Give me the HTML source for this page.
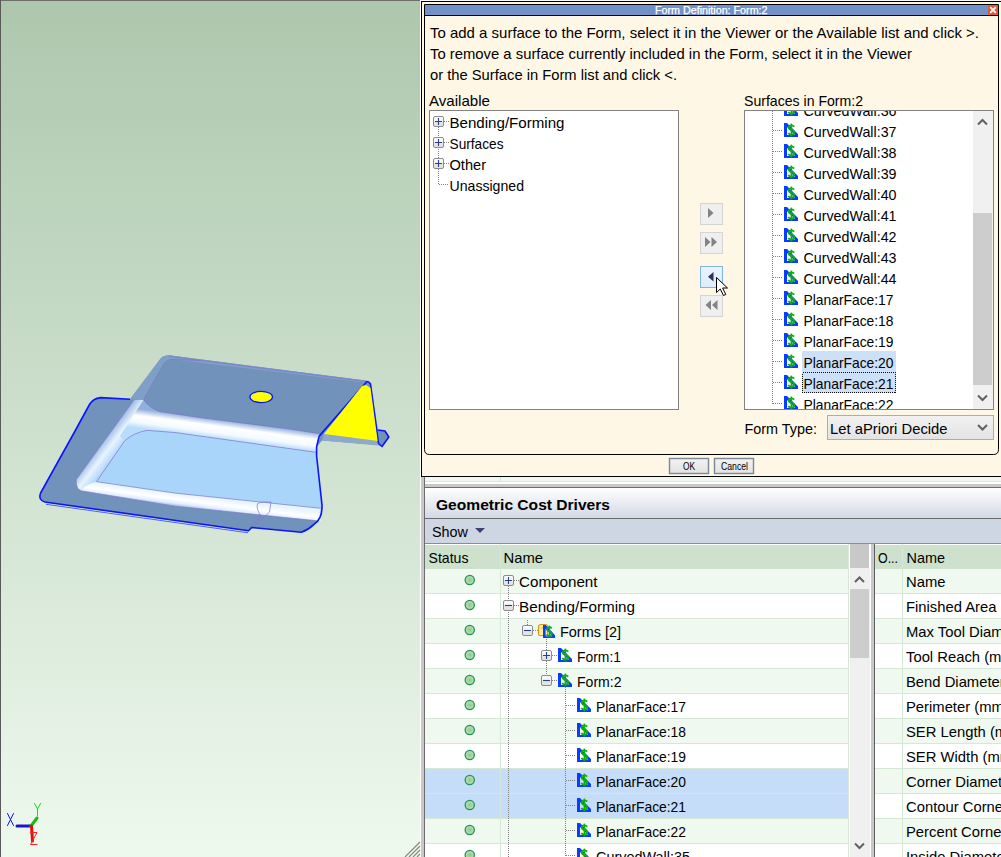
<!DOCTYPE html>
<html><head><meta charset="utf-8"><style>
html,body{margin:0;padding:0;width:1001px;height:857px;overflow:hidden;background:#fff}
svg{display:block}
text{font-family:'Liberation Sans', sans-serif}
</style></head><body>
<svg width="1001" height="857" viewBox="0 0 1001 857">
<defs>
<linearGradient id="vbg" x1="0" y1="0" x2="0" y2="1"><stop offset="0" stop-color="#adc7ad"/><stop offset="1" stop-color="#eef9ee"/></linearGradient>
<linearGradient id="hdr" x1="0" y1="0" x2="0" y2="1"><stop offset="0" stop-color="#ffffff"/><stop offset="1" stop-color="#d2d9e5"/></linearGradient>
<linearGradient id="btn" x1="0" y1="0" x2="0" y2="1"><stop offset="0" stop-color="#f2f2f2"/><stop offset="1" stop-color="#e3e3e3"/></linearGradient>
<linearGradient id="hov" x1="0" y1="0" x2="0" y2="1"><stop offset="0" stop-color="#ebf4fc"/><stop offset="1" stop-color="#dcecfc"/></linearGradient>
<linearGradient id="exp" x1="0" y1="0" x2="0" y2="1"><stop offset="0" stop-color="#fbfbfb"/><stop offset="0.5" stop-color="#f4f4f4"/><stop offset="0.5" stop-color="#e6e6e6"/><stop offset="1" stop-color="#e2e2e2"/></linearGradient>
<radialGradient id="dot" cx="0.5" cy="0.5" r="0.5"><stop offset="0" stop-color="#8cc694"/><stop offset="0.7" stop-color="#b2dcaa"/><stop offset="1" stop-color="#9cd09c"/></radialGradient>
<g id="ico"><path d="M0 0H3L14 11V14H0Z M3 4V12H11Z" fill="#0a3cff" fill-rule="evenodd"/><path d="M10.2 3.6Q9.2 2.4 7.4 2.4Q4.8 2.4 4.8 4.6Q4.8 6.4 7.4 6.9Q10.2 7.4 10.2 9.6Q10.2 11.6 7.4 11.6Q5.4 11.6 4.2 10.2" stroke="#0cb00c" stroke-width="1.9" fill="none"/><path d="M7.4 0.6V13.4" stroke="#0cb00c" stroke-width="1.6"/></g>
<g id="plus"><rect x="0.5" y="0.5" width="10" height="10" rx="1.5" fill="url(#exp)" stroke="#8c8c8c"/><path d="M2 5.5H9M5.5 2V9" stroke="#27408e" stroke-width="1.1"/></g>
<g id="minus"><rect x="0.5" y="0.5" width="10" height="10" rx="1.5" fill="url(#exp)" stroke="#8c8c8c"/><path d="M2 5.5H9" stroke="#27408e" stroke-width="1.1"/></g>
</defs>
<rect x="0" y="0" width="420" height="857" fill="url(#vbg)"/>
<rect x="0" y="0" width="420" height="1" fill="#6e6e6e"/>
<rect x="0" y="0" width="1" height="857" fill="#5a5a5a"/>
<rect x="420" y="0" width="1" height="857" fill="#ffffff"/>
<defs>
<linearGradient id="tf" gradientUnits="userSpaceOnUse" x1="175" y1="413.6" x2="172.4" y2="432.8"><stop offset="0" stop-color="#8fb0dc"/><stop offset="0.35" stop-color="#ffffff"/><stop offset="0.7" stop-color="#f4faff"/><stop offset="1" stop-color="#b8dcfc"/></linearGradient>
<linearGradient id="tf2" gradientUnits="userSpaceOnUse" x1="0" y1="429" x2="-2.5" y2="452"><stop offset="0" stop-color="#8fb0dc"/><stop offset="0.35" stop-color="#ffffff"/><stop offset="0.7" stop-color="#f4faff"/><stop offset="1" stop-color="#b8dcfc"/></linearGradient>
<linearGradient id="bf" gradientUnits="userSpaceOnUse" x1="175" y1="493.1" x2="173.3" y2="506.2"><stop offset="0" stop-color="#e8f4ff"/><stop offset="0.45" stop-color="#ffffff"/><stop offset="0.75" stop-color="#e0eeff"/><stop offset="1" stop-color="#98b8e0"/></linearGradient>
<linearGradient id="lf" gradientUnits="userSpaceOnUse" x1="95" y1="447" x2="112" y2="460"><stop offset="0" stop-color="#88acdc"/><stop offset="0.55" stop-color="#e8f4ff"/><stop offset="1" stop-color="#b0d6fa"/></linearGradient>
</defs>
<g>
<path d="M100.7 397.6 L130 399.2 L161 358.1 Q164 355.3 169 355.3 L365.8 380.4 Q368.5 380.5 370.5 383.5 L378 430 L385 431 L388.8 437 L382 446.5 L378.5 445 L322 440.5 L316.6 447 L316.6 456 L322 505 Q322.5 519 314 524.3 Q308 530 301.3 532.3 L251.7 527.5 L248.5 530.7 L44.8 502 Q38 500 40.6 493 L75.6 430 L89.5 404.5 Q93 398.5 100.7 397.6 Z" fill="#7192ba"/>
<path d="M134 400 L76.3 479.6 Q75.5 488.5 81 490.8 L175 506.2 L319 521 L322 505 L316.6 456 L316.6 447 L319.7 433.7 L290 429 L200 417.6 L159.4 411.5 Q148 407 143.6 399.7 Z" fill="#a8cdf4"/>
<path d="M134 400 L76.3 479.6 Q75.5 488.5 81 490.8 L96.5 481.7 L124.5 441 Q128 436 133 434 L147 430 L143.6 399.7 Z" fill="url(#lf)"/>
<path d="M143.6 399.7 Q148 407 159.4 411.5 L200 417.6 L290 429 L319.7 433.7 L316.6 447 L316.5 452.4 L175 432.5 L147 430.4 Q136 432 124.5 441 L120 436 Z" fill="url(#tf)"/>
<path d="M124.5 441 Q133 433 147 430.4 L175 432.5 L316.5 452.4 L320.5 508.3 L175 493.1 L96.5 481.7 Z" fill="#aad5fa"/>
<path d="M96.5 481.7 L175 493.1 L320.5 508.3 L321 521 L175 506.2 L81 490.8 Q86 484 96.5 481.7 Z" fill="url(#bf)"/>
<path d="M163.7 364.2 Q167 359.4 172.5 359.4 L364 383 L368 386 L319 436.4 L319.7 433.7 L290 429 L200 417.6 L159.4 411.5 Q148 407 143.6 399.7 Z" fill="#7192ba"/>
<path d="M130 399.2 L161 358.1 Q164 355.3 169 355.3 L365.8 380.4 L364 382.6 L172.5 359.4 Q167 359.4 163.7 364.2 L143.6 399.7 Z" fill="#7f9fc8"/>
<path d="M324 434 L378 441 L378.5 445.5 L322 440.5 Z" fill="#8ea9cc"/>
<g fill="none" stroke="#7c74c8" stroke-width="0.7">
<path d="M169 356.3 L365.8 381.4"/>
<path d="M143.6 399.7 Q148 407 159.4 411.5 L200 417.6 L290 429 L319.7 433.7"/>
<path d="M124.5 441 Q133 433 147 430.4 L175 432.5 L316.5 452.4"/>
<path d="M96.5 481.7 L175 493.1 L320.5 508.3"/>
<path d="M124.5 441 L96.5 481.7"/>
<path d="M134 400 L76.3 479.6 Q75.5 488.5 81 490.8 L175 506.2 L319 521"/>
<path d="M163.7 364.2 Q167 359.4 172.5 359.4 L200 360.5 M163.7 364.2 L143.6 399.7"/>
<path d="M257.5 503.5 Q262 501.5 271 502 L269.5 512 M257.5 503.5 Q256 509 261 516.5 L249 527.5 M269.5 512 L254 526.5"/>
</g>
<g fill="none" stroke="#0a14ff" stroke-width="1.6" stroke-linejoin="round">
<path d="M130 399.2 L100.7 397.6 Q93 398.5 89.5 404.5 L75.6 430 L40.6 493 Q38 500 44.8 502 L248.5 530.7 L251.7 527.5 L301.3 532.3 Q308 530 314 524.3 Q322.5 519 322 505 L316.6 456 L316.6 447 L319 436.4"/>
<path d="M46 504.3 L248 532.8" stroke-width="0.8" stroke="#3040ff"/>
<path d="M319 436.4 L367 381.5 Q369 381.5 370.5 384 L378.5 443.5"/>
<path d="M378 430 L385 431 L388.8 437 L382 446.5 L378.5 443.5"/>
</g>
<path d="M362 386 L366 385 L370.5 388 L377.6 441 L324 434 Z" fill="#ffff00"/>
<ellipse cx="261.2" cy="397" rx="11.3" ry="5.6" fill="#ffff00" stroke="#0a14ff" stroke-width="1.3"/>
</g>
<g stroke-linecap="round">
<path d="M7.5 813.5L13.5 825.5M13.5 813.5L7.5 825.5" stroke="#1010ff" stroke-width="1"/>
<path d="M17 826H31" stroke="#1818d0" stroke-width="3"/>
<path d="M34.5 803.5L37.5 809M40.5 803.5L37.5 809V816" stroke="#10e010" stroke-width="1" fill="none"/>
<path d="M31 826L37 818" stroke="#10c010" stroke-width="3"/>
<path d="M31.5 826L32.5 841" stroke="#e01010" stroke-width="3"/>
<path d="M30.5 832.5H37L30.5 844.5H37" stroke="#ff2020" stroke-width="1" fill="none"/>
</g>
<path d="M405 857L420 842M409 857L420 846M413 857L420 850M417 857L420 854" stroke="#8a8a7a" stroke-width="1.2"/>
<rect x="421" y="0" width="580" height="857" fill="#ffffff"/>
<rect x="421" y="477" width="580" height="4" fill="#f0f9f0"/>
<rect x="421" y="481" width="580" height="1" fill="#d5e8d5"/>
<rect x="500" y="477" width="1" height="5" fill="#d5e8d5"/>
<rect x="421" y="484" width="580" height="3" fill="#c8c8c8"/>
<rect x="421" y="487" width="580" height="1" fill="#6c6c6c"/>
<rect x="425" y="488" width="576" height="30" fill="url(#hdr)"/>
<rect x="425" y="518" width="576" height="1" fill="#6c6c6c"/>
<rect x="425" y="519" width="576" height="24" fill="#cfd6e3"/>
<rect x="425" y="543" width="576" height="1" fill="#8c8c8c"/>
<rect x="421" y="477" width="3" height="380" fill="#c8c8c8"/>
<rect x="424" y="477" width="1" height="380" fill="#6c6c6c"/>
<text x="436" y="510" font-size="15.5" fill="#000" textLength="174" lengthAdjust="spacingAndGlyphs" font-weight="bold">Geometric Cost Drivers</text>
<text x="432" y="537" font-size="14.5" fill="#000" textLength="36" lengthAdjust="spacingAndGlyphs">Show</text>
<path d="M475 528H485L480 533Z" fill="#404070"/>
<rect x="425" y="544" width="424" height="25" fill="#cde1cd"/>
<rect x="425" y="544" width="424" height="1" fill="#ffffff"/>
<text x="428.5" y="563" font-size="15" fill="#000" textLength="40" lengthAdjust="spacingAndGlyphs">Status</text>
<text x="503.5" y="563" font-size="15" fill="#000" textLength="39.5" lengthAdjust="spacingAndGlyphs">Name</text>
<rect x="500" y="544" width="1" height="313" fill="#d5e8d5"/>
<rect x="425" y="569" width="424" height="24" fill="#f0f9f0"/>
<rect x="425" y="593" width="424" height="1" fill="#d5e8d5"/>
<rect x="500" y="569" width="1" height="25" fill="#d5e8d5"/>
<circle cx="469.75" cy="580" r="4.6" fill="url(#dot)" stroke="#22945a" stroke-width="1.3"/>
<rect x="425" y="594" width="424" height="24" fill="#ffffff"/>
<rect x="425" y="618" width="424" height="1" fill="#d5e8d5"/>
<rect x="500" y="594" width="1" height="25" fill="#d5e8d5"/>
<circle cx="469.75" cy="605" r="4.6" fill="url(#dot)" stroke="#22945a" stroke-width="1.3"/>
<rect x="425" y="619" width="424" height="24" fill="#f0f9f0"/>
<rect x="425" y="643" width="424" height="1" fill="#d5e8d5"/>
<rect x="500" y="619" width="1" height="25" fill="#d5e8d5"/>
<circle cx="469.75" cy="630" r="4.6" fill="url(#dot)" stroke="#22945a" stroke-width="1.3"/>
<rect x="425" y="644" width="424" height="24" fill="#ffffff"/>
<rect x="425" y="668" width="424" height="1" fill="#d5e8d5"/>
<rect x="500" y="644" width="1" height="25" fill="#d5e8d5"/>
<circle cx="469.75" cy="655" r="4.6" fill="url(#dot)" stroke="#22945a" stroke-width="1.3"/>
<rect x="425" y="669" width="424" height="24" fill="#f0f9f0"/>
<rect x="425" y="693" width="424" height="1" fill="#d5e8d5"/>
<rect x="500" y="669" width="1" height="25" fill="#d5e8d5"/>
<circle cx="469.75" cy="680" r="4.6" fill="url(#dot)" stroke="#22945a" stroke-width="1.3"/>
<rect x="425" y="694" width="424" height="24" fill="#ffffff"/>
<rect x="425" y="718" width="424" height="1" fill="#d5e8d5"/>
<rect x="500" y="694" width="1" height="25" fill="#d5e8d5"/>
<circle cx="469.75" cy="705" r="4.6" fill="url(#dot)" stroke="#22945a" stroke-width="1.3"/>
<rect x="425" y="719" width="424" height="24" fill="#f0f9f0"/>
<rect x="425" y="743" width="424" height="1" fill="#d5e8d5"/>
<rect x="500" y="719" width="1" height="25" fill="#d5e8d5"/>
<circle cx="469.75" cy="730" r="4.6" fill="url(#dot)" stroke="#22945a" stroke-width="1.3"/>
<rect x="425" y="744" width="424" height="24" fill="#ffffff"/>
<rect x="425" y="768" width="424" height="1" fill="#d5e8d5"/>
<rect x="500" y="744" width="1" height="25" fill="#d5e8d5"/>
<circle cx="469.75" cy="755" r="4.6" fill="url(#dot)" stroke="#22945a" stroke-width="1.3"/>
<rect x="425" y="769" width="424" height="24" fill="#c5ddf8"/>
<rect x="425" y="793" width="424" height="1" fill="#d5e8d5"/>
<rect x="500" y="769" width="1" height="25" fill="#d5e8d5"/>
<circle cx="469.75" cy="780" r="4.6" fill="url(#dot)" stroke="#22945a" stroke-width="1.3"/>
<rect x="425" y="794" width="424" height="24" fill="#c5ddf8"/>
<rect x="425" y="818" width="424" height="1" fill="#d5e8d5"/>
<rect x="500" y="794" width="1" height="25" fill="#d5e8d5"/>
<circle cx="469.75" cy="805" r="4.6" fill="url(#dot)" stroke="#22945a" stroke-width="1.3"/>
<rect x="425" y="819" width="424" height="24" fill="#f0f9f0"/>
<rect x="425" y="843" width="424" height="1" fill="#d5e8d5"/>
<rect x="500" y="819" width="1" height="25" fill="#d5e8d5"/>
<circle cx="469.75" cy="830" r="4.6" fill="url(#dot)" stroke="#22945a" stroke-width="1.3"/>
<rect x="425" y="844" width="424" height="24" fill="#ffffff"/>
<rect x="425" y="868" width="424" height="1" fill="#d5e8d5"/>
<rect x="500" y="844" width="1" height="25" fill="#d5e8d5"/>
<circle cx="469.75" cy="855" r="4.6" fill="url(#dot)" stroke="#22945a" stroke-width="1.3"/>
<g stroke="#808080" stroke-dasharray="1 1" stroke-width="1">
<path d="M508.5 586V857"/>
<path d="M527.5 620V625"/>
<path d="M546.5 637V676"/>
<path d="M565.5 687V857"/>
</g>
<path d="M514 580.5H519" stroke="#808080" stroke-dasharray="1 1"/>
<use href="#plus" x="503" y="575"/>
<text x="519" y="587" font-size="14.8" fill="#000" textLength="78.5" lengthAdjust="spacingAndGlyphs">Component</text>
<path d="M514 605.5H519" stroke="#808080" stroke-dasharray="1 1"/>
<use href="#minus" x="503" y="600"/>
<text x="519" y="612" font-size="14.8" fill="#000" textLength="116" lengthAdjust="spacingAndGlyphs">Bending/Forming</text>
<path d="M533 630.5H538" stroke="#808080" stroke-dasharray="1 1"/>
<use href="#minus" x="522" y="625"/>
<path d="M538.5 626.5Q538.5 624.5 541 624.5H545.5Q547.5 624.5 547.5 626.5V635.5H540Q538.5 635.5 538.5 634Z" fill="#fff09a" stroke="#d8961e" stroke-width="1.2"/>
<path d="M540.5 628H544.5V634" stroke="#e8a838" fill="none"/>
<g transform="translate(543 625) scale(0.86 0.93)"><use href="#ico"/></g>
<text x="560" y="637" font-size="14.8" fill="#000" textLength="61" lengthAdjust="spacingAndGlyphs">Forms [2]</text>
<path d="M552 655.5H557" stroke="#808080" stroke-dasharray="1 1"/>
<use href="#plus" x="541" y="650"/>
<use href="#ico" x="558" y="648"/>
<text x="577" y="662" font-size="14.8" fill="#000" textLength="44" lengthAdjust="spacingAndGlyphs">Form:1</text>
<path d="M552 680.5H557" stroke="#808080" stroke-dasharray="1 1"/>
<use href="#minus" x="541" y="675"/>
<use href="#ico" x="558" y="673"/>
<text x="577" y="687" font-size="14.8" fill="#000" textLength="44.5" lengthAdjust="spacingAndGlyphs">Form:2</text>
<path d="M566 705.5H576" stroke="#808080" stroke-dasharray="1 1"/>
<use href="#ico" x="577" y="698"/>
<text x="596" y="712" font-size="14.8" fill="#000" textLength="90" lengthAdjust="spacingAndGlyphs">PlanarFace:17</text>
<path d="M566 730.5H576" stroke="#808080" stroke-dasharray="1 1"/>
<use href="#ico" x="577" y="723"/>
<text x="596" y="737" font-size="14.8" fill="#000" textLength="90" lengthAdjust="spacingAndGlyphs">PlanarFace:18</text>
<path d="M566 755.5H576" stroke="#808080" stroke-dasharray="1 1"/>
<use href="#ico" x="577" y="748"/>
<text x="596" y="762" font-size="14.8" fill="#000" textLength="90" lengthAdjust="spacingAndGlyphs">PlanarFace:19</text>
<path d="M566 780.5H576" stroke="#808080" stroke-dasharray="1 1"/>
<use href="#ico" x="577" y="773"/>
<text x="596" y="787" font-size="14.8" fill="#000" textLength="90" lengthAdjust="spacingAndGlyphs">PlanarFace:20</text>
<path d="M566 805.5H576" stroke="#808080" stroke-dasharray="1 1"/>
<use href="#ico" x="577" y="798"/>
<text x="596" y="812" font-size="14.8" fill="#000" textLength="90" lengthAdjust="spacingAndGlyphs">PlanarFace:21</text>
<path d="M566 830.5H576" stroke="#808080" stroke-dasharray="1 1"/>
<use href="#ico" x="577" y="823"/>
<text x="596" y="837" font-size="14.8" fill="#000" textLength="90" lengthAdjust="spacingAndGlyphs">PlanarFace:22</text>
<path d="M566 855.5H576" stroke="#808080" stroke-dasharray="1 1"/>
<use href="#ico" x="577" y="848"/>
<text x="596" y="862" font-size="14.8" fill="#000" textLength="94" lengthAdjust="spacingAndGlyphs">CurvedWall:35</text>
<rect x="849" y="544" width="1" height="313" fill="#ffffff"/>
<rect x="850" y="544" width="19" height="24" fill="#c8c8c8"/>
<rect x="850" y="568" width="20" height="289" fill="#f0f0f0"/>
<rect x="850" y="589" width="19" height="69" fill="#cdcdcd"/>
<rect x="870" y="544" width="1" height="313" fill="#ffffff"/>
<path d="M855 582L859.5 577.5L864 582" stroke="#606060" stroke-width="2" fill="none"/>
<path d="M855 843.5L859.5 848L864 843.5" stroke="#606060" stroke-width="2" fill="none"/>
<rect x="848" y="544" width="1" height="313" fill="#d5e8d5"/>
<rect x="871" y="544" width="3" height="313" fill="#c8c8c8"/>
<rect x="874" y="544" width="1" height="313" fill="#606060"/>
<rect x="875" y="544" width="126" height="25" fill="#cde1cd"/>
<rect x="875" y="544" width="126" height="1" fill="#ffffff"/>
<rect x="902" y="544" width="1" height="313" fill="#d5e8d5"/>
<text x="878" y="563" font-size="14.5" fill="#000" textLength="20" lengthAdjust="spacingAndGlyphs">O...</text>
<text x="906.5" y="563" font-size="15" fill="#000" textLength="38.5" lengthAdjust="spacingAndGlyphs">Name</text>
<rect x="875" y="569" width="126" height="24" fill="#f0f9f0"/>
<rect x="875" y="593" width="126" height="1" fill="#d5e8d5"/>
<rect x="902" y="569" width="1" height="25" fill="#d5e8d5"/>
<text x="906" y="587" font-size="14.8" fill="#000">Name</text>
<rect x="875" y="594" width="126" height="24" fill="#ffffff"/>
<rect x="875" y="618" width="126" height="1" fill="#d5e8d5"/>
<rect x="902" y="594" width="1" height="25" fill="#d5e8d5"/>
<text x="906" y="612" font-size="14.8" fill="#000">Finished Area (</text>
<rect x="875" y="619" width="126" height="24" fill="#f0f9f0"/>
<rect x="875" y="643" width="126" height="1" fill="#d5e8d5"/>
<rect x="902" y="619" width="1" height="25" fill="#d5e8d5"/>
<text x="906" y="637" font-size="14.8" fill="#000">Max Tool Diameter</text>
<rect x="875" y="644" width="126" height="24" fill="#ffffff"/>
<rect x="875" y="668" width="126" height="1" fill="#d5e8d5"/>
<rect x="902" y="644" width="1" height="25" fill="#d5e8d5"/>
<text x="906" y="662" font-size="14.8" fill="#000">Tool Reach (mm)</text>
<rect x="875" y="669" width="126" height="24" fill="#f0f9f0"/>
<rect x="875" y="693" width="126" height="1" fill="#d5e8d5"/>
<rect x="902" y="669" width="1" height="25" fill="#d5e8d5"/>
<text x="906" y="687" font-size="14.8" fill="#000">Bend Diameter</text>
<rect x="875" y="694" width="126" height="24" fill="#ffffff"/>
<rect x="875" y="718" width="126" height="1" fill="#d5e8d5"/>
<rect x="902" y="694" width="1" height="25" fill="#d5e8d5"/>
<text x="906" y="712" font-size="14.8" fill="#000">Perimeter (mm)</text>
<rect x="875" y="719" width="126" height="24" fill="#f0f9f0"/>
<rect x="875" y="743" width="126" height="1" fill="#d5e8d5"/>
<rect x="902" y="719" width="1" height="25" fill="#d5e8d5"/>
<text x="906" y="737" font-size="14.8" fill="#000">SER Length (mm)</text>
<rect x="875" y="744" width="126" height="24" fill="#ffffff"/>
<rect x="875" y="768" width="126" height="1" fill="#d5e8d5"/>
<rect x="902" y="744" width="1" height="25" fill="#d5e8d5"/>
<text x="906" y="762" font-size="14.8" fill="#000">SER Width (mm)</text>
<rect x="875" y="769" width="126" height="24" fill="#f0f9f0"/>
<rect x="875" y="793" width="126" height="1" fill="#d5e8d5"/>
<rect x="902" y="769" width="1" height="25" fill="#d5e8d5"/>
<text x="906" y="787" font-size="14.8" fill="#000">Corner Diameter</text>
<rect x="875" y="794" width="126" height="24" fill="#ffffff"/>
<rect x="875" y="818" width="126" height="1" fill="#d5e8d5"/>
<rect x="902" y="794" width="1" height="25" fill="#d5e8d5"/>
<text x="906" y="812" font-size="14.8" fill="#000">Contour Corner</text>
<rect x="875" y="819" width="126" height="24" fill="#f0f9f0"/>
<rect x="875" y="843" width="126" height="1" fill="#d5e8d5"/>
<rect x="902" y="819" width="1" height="25" fill="#d5e8d5"/>
<text x="906" y="837" font-size="14.8" fill="#000">Percent Corner</text>
<rect x="875" y="844" width="126" height="24" fill="#ffffff"/>
<rect x="875" y="868" width="126" height="1" fill="#d5e8d5"/>
<rect x="902" y="844" width="1" height="25" fill="#d5e8d5"/>
<text x="906" y="862" font-size="14.8" fill="#000">Inside Diameter</text>
<rect x="421" y="1" width="580" height="476" fill="#000000"/>
<rect x="422" y="2" width="579" height="474" fill="#fff7e6"/>
<path d="M424.5 4.5H998.5V449.5Q998.5 454.5 993.5 454.5H429.5Q424.5 454.5 424.5 449.5Z" fill="#fff7e6" stroke="#000" stroke-width="1"/>
<rect x="425" y="5" width="573" height="10" fill="#7192c8"/>
<rect x="425" y="15" width="573" height="1" fill="#000"/>
<text x="655" y="13.5" font-size="10.5" fill="#ffffff" textLength="112.5" lengthAdjust="spacingAndGlyphs" stroke="#ffffff" stroke-width="0.25">Form Definition: Form:2</text>
<rect x="988" y="5" width="10" height="10" fill="#e05a38"/>
<path d="M990.2 7.2L995.8 12.8M995.8 7.2L990.2 12.8" stroke="#fff" stroke-width="1.8"/>
<text x="430" y="38" font-size="15" fill="#000" textLength="549" lengthAdjust="spacingAndGlyphs">To add a surface to the Form, select it in the Viewer or the Available list and click &gt;.</text>
<text x="430" y="59" font-size="15" fill="#000" textLength="482" lengthAdjust="spacingAndGlyphs">To remove a surface currently included in the Form, select it in the Viewer</text>
<text x="430" y="80" font-size="15" fill="#000" textLength="247" lengthAdjust="spacingAndGlyphs">or the Surface in Form list and click &lt;.</text>
<text x="429" y="106" font-size="15" fill="#000" textLength="61" lengthAdjust="spacingAndGlyphs">Available</text>
<text x="744" y="106" font-size="14.5" fill="#000" textLength="119" lengthAdjust="spacingAndGlyphs">Surfaces in Form:2</text>
<rect x="429" y="110" width="250" height="300" fill="#828282"/>
<rect x="430" y="111" width="248" height="298" fill="#ffffff"/>
<g stroke="#808080" stroke-dasharray="1 1"><path d="M438.5 127V185"/><path d="M439 184.5H449"/>
<path d="M444 121.5H449"/>
<path d="M444 142.5H449"/>
<path d="M444 163.5H449"/>
</g>
<use href="#plus" x="433" y="116"/>
<use href="#plus" x="433" y="137"/>
<use href="#plus" x="433" y="158"/>
<text x="449.5" y="128" font-size="15" fill="#000" textLength="115" lengthAdjust="spacingAndGlyphs">Bending/Forming</text>
<text x="449.5" y="149" font-size="15" fill="#000" textLength="54" lengthAdjust="spacingAndGlyphs">Surfaces</text>
<text x="449.5" y="170" font-size="15" fill="#000" textLength="36.5" lengthAdjust="spacingAndGlyphs">Other</text>
<text x="449.5" y="191" font-size="15" fill="#000" textLength="74.5" lengthAdjust="spacingAndGlyphs">Unassigned</text>
<rect x="744" y="110" width="250" height="300" fill="#828282"/>
<rect x="745" y="111" width="248" height="298" fill="#ffffff"/>
<svg x="745" y="111" width="228" height="298">
<g stroke="#808080" stroke-dasharray="1 1"><path d="M27.5 0V293"/></g>
<path d="M28 -1.5H38" stroke="#808080" stroke-dasharray="1 1"/>
<use href="#ico" x="39" y="-9"/>
<text x="58.5" y="5" font-size="14.5" fill="#000" textLength="93" lengthAdjust="spacingAndGlyphs">CurvedWall:36</text>
<path d="M28 19.5H38" stroke="#808080" stroke-dasharray="1 1"/>
<use href="#ico" x="39" y="12"/>
<text x="58.5" y="26" font-size="14.5" fill="#000" textLength="93" lengthAdjust="spacingAndGlyphs">CurvedWall:37</text>
<path d="M28 40.5H38" stroke="#808080" stroke-dasharray="1 1"/>
<use href="#ico" x="39" y="33"/>
<text x="58.5" y="47" font-size="14.5" fill="#000" textLength="93" lengthAdjust="spacingAndGlyphs">CurvedWall:38</text>
<path d="M28 61.5H38" stroke="#808080" stroke-dasharray="1 1"/>
<use href="#ico" x="39" y="54"/>
<text x="58.5" y="68" font-size="14.5" fill="#000" textLength="93" lengthAdjust="spacingAndGlyphs">CurvedWall:39</text>
<path d="M28 82.5H38" stroke="#808080" stroke-dasharray="1 1"/>
<use href="#ico" x="39" y="75"/>
<text x="58.5" y="89" font-size="14.5" fill="#000" textLength="93" lengthAdjust="spacingAndGlyphs">CurvedWall:40</text>
<path d="M28 103.5H38" stroke="#808080" stroke-dasharray="1 1"/>
<use href="#ico" x="39" y="96"/>
<text x="58.5" y="110" font-size="14.5" fill="#000" textLength="93" lengthAdjust="spacingAndGlyphs">CurvedWall:41</text>
<path d="M28 124.5H38" stroke="#808080" stroke-dasharray="1 1"/>
<use href="#ico" x="39" y="117"/>
<text x="58.5" y="131" font-size="14.5" fill="#000" textLength="93" lengthAdjust="spacingAndGlyphs">CurvedWall:42</text>
<path d="M28 145.5H38" stroke="#808080" stroke-dasharray="1 1"/>
<use href="#ico" x="39" y="138"/>
<text x="58.5" y="152" font-size="14.5" fill="#000" textLength="93" lengthAdjust="spacingAndGlyphs">CurvedWall:43</text>
<path d="M28 166.5H38" stroke="#808080" stroke-dasharray="1 1"/>
<use href="#ico" x="39" y="159"/>
<text x="58.5" y="173" font-size="14.5" fill="#000" textLength="93" lengthAdjust="spacingAndGlyphs">CurvedWall:44</text>
<path d="M28 187.5H38" stroke="#808080" stroke-dasharray="1 1"/>
<use href="#ico" x="39" y="180"/>
<text x="58.5" y="194" font-size="14.5" fill="#000" textLength="90" lengthAdjust="spacingAndGlyphs">PlanarFace:17</text>
<path d="M28 208.5H38" stroke="#808080" stroke-dasharray="1 1"/>
<use href="#ico" x="39" y="201"/>
<text x="58.5" y="215" font-size="14.5" fill="#000" textLength="90" lengthAdjust="spacingAndGlyphs">PlanarFace:18</text>
<path d="M28 229.5H38" stroke="#808080" stroke-dasharray="1 1"/>
<use href="#ico" x="39" y="222"/>
<text x="58.5" y="236" font-size="14.5" fill="#000" textLength="90" lengthAdjust="spacingAndGlyphs">PlanarFace:19</text>
<rect x="57" y="240" width="94" height="21" fill="#cce0f8"/>
<path d="M28 250.5H38" stroke="#808080" stroke-dasharray="1 1"/>
<use href="#ico" x="39" y="243"/>
<text x="58.5" y="257" font-size="14.5" fill="#000" textLength="90" lengthAdjust="spacingAndGlyphs">PlanarFace:20</text>
<rect x="57" y="261" width="94" height="21" fill="#cce0f8"/>
<rect x="57.5" y="261.5" width="93" height="20" fill="none" stroke="#101010" stroke-dasharray="1 1" shape-rendering="crispEdges"/>
<path d="M28 271.5H38" stroke="#808080" stroke-dasharray="1 1"/>
<use href="#ico" x="39" y="264"/>
<text x="58.5" y="278" font-size="14.5" fill="#000" textLength="90" lengthAdjust="spacingAndGlyphs">PlanarFace:21</text>
<path d="M28 292.5H38" stroke="#808080" stroke-dasharray="1 1"/>
<use href="#ico" x="39" y="285"/>
<text x="58.5" y="299" font-size="14.5" fill="#000" textLength="90" lengthAdjust="spacingAndGlyphs">PlanarFace:22</text>
</svg>
<rect x="973" y="111" width="20" height="298" fill="#f0f0f0"/>
<rect x="973" y="213" width="19" height="172" fill="#cdcdcd"/>
<path d="M978 124.5L982.5 120L987 124.5" stroke="#606060" stroke-width="2" fill="none"/>
<path d="M978 395.5L982.5 400L987 395.5" stroke="#606060" stroke-width="2" fill="none"/>
<rect x="700.5" y="203.5" width="22" height="21" fill="#efefef" stroke="#d4d4d4"/>
<path d="M708 208V218L713.5 213Z" fill="#838383"/>
<rect x="700.5" y="232.5" width="22" height="21" fill="#efefef" stroke="#d4d4d4"/>
<path d="M705 237V247L710.5 242Z M711.5 237V247L717 242Z" fill="#838383"/>
<rect x="700.5" y="266.5" width="22" height="21" fill="url(#hov)" stroke="#7eb4ea"/>
<path d="M713.5 272V281.5L708 276.75Z" fill="#30305a"/>
<rect x="700.5" y="295.5" width="22" height="21" fill="#efefef" stroke="#d4d4d4"/>
<path d="M711 300V310L705.5 305Z M717.5 300V310L712 305Z" fill="#838383"/>
<path d="M716.5 277.5V292.5L720.2 289L723.5 295.5L725.8 294.5L722.6 288L727.5 288Z" fill="#fff" stroke="#000" stroke-width="1" stroke-linejoin="round"/>
<text x="744.5" y="434" font-size="14.5" fill="#000" textLength="72.5" lengthAdjust="spacingAndGlyphs">Form Type:</text>
<rect x="827.5" y="415.5" width="166" height="24" fill="url(#btn)" stroke="#adadad"/>
<text x="830" y="434" font-size="14.5" fill="#000" textLength="117.5" lengthAdjust="spacingAndGlyphs">Let aPriori Decide</text>
<path d="M978 425L982.5 429.5L987 425" stroke="#606060" stroke-width="2" fill="none"/>
<rect x="669.5" y="458.5" width="39" height="15" fill="url(#btn)" stroke="#7a8898" stroke-width="1.4"/>
<rect x="714.5" y="458.5" width="39" height="15" fill="url(#btn)" stroke="#7a8898" stroke-width="1.4"/>
<text x="683" y="470" font-size="10.5" fill="#000" textLength="12" lengthAdjust="spacingAndGlyphs">OK</text>
<text x="721" y="470" font-size="10.5" fill="#000" textLength="27" lengthAdjust="spacingAndGlyphs">Cancel</text>
</svg>
</body></html>
